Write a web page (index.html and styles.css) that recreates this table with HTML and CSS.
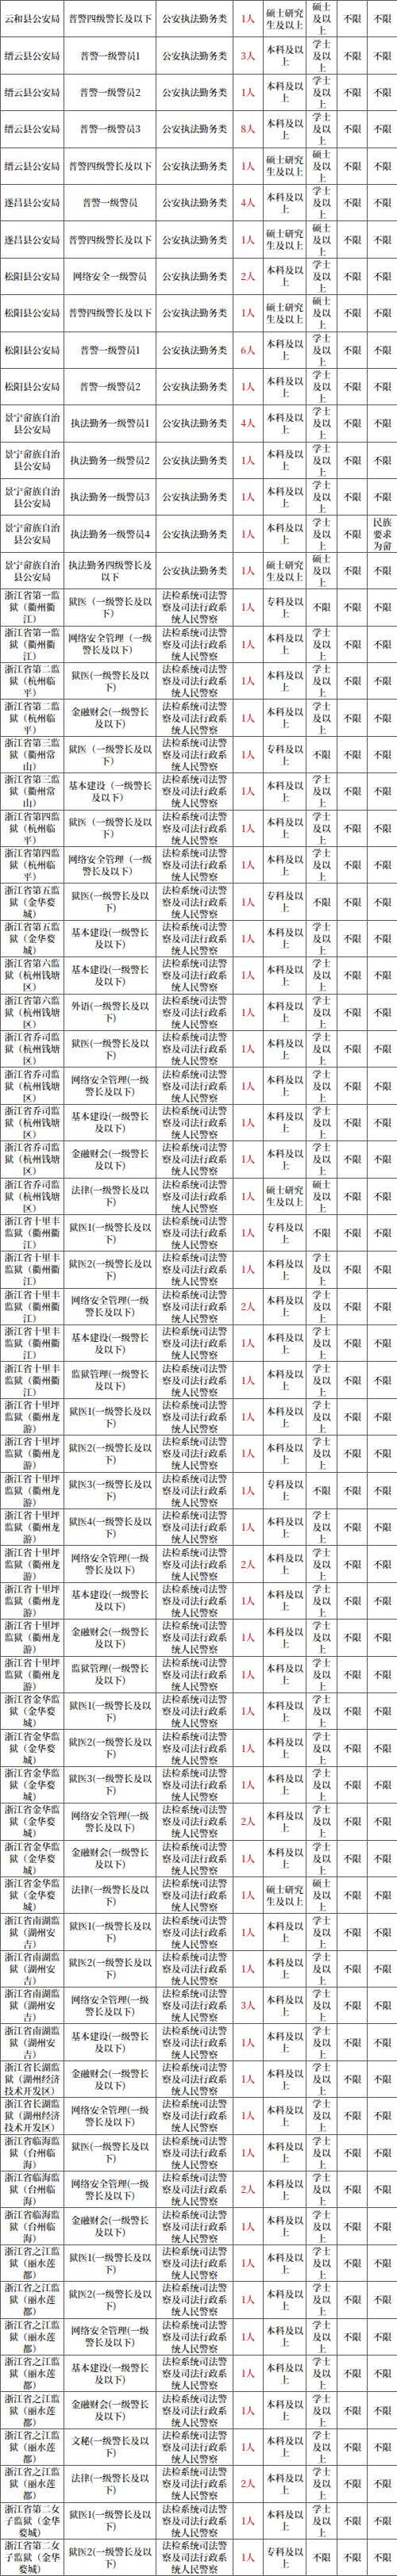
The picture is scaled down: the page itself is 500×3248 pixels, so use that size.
FILE: index.html
```html
<!DOCTYPE html>
<html lang="zh-CN">
<head>
<meta charset="utf-8">
<title>职位表</title>
<link rel="stylesheet" href="styles.css">
</head>
<body>
<table class="posts">
<colgroup>
<col class="c-unit"><col class="c-post"><col class="c-type"><col class="c-num"><col class="c-edu"><col class="c-deg"><col class="c-a"><col class="c-b">
</colgroup>
<tbody>
<tr><td>云和县公安局</td><td>普警四级警长及以下</td><td>公安执法勤务类</td><td class="num">1人</td><td>硕士研究生及以上</td><td>硕士及以上</td><td>不限</td><td>不限</td></tr>
<tr><td>缙云县公安局</td><td>普警一级警员1</td><td>公安执法勤务类</td><td class="num">3人</td><td>本科及以上</td><td>学士及以上</td><td>不限</td><td>不限</td></tr>
<tr><td>缙云县公安局</td><td>普警一级警员2</td><td>公安执法勤务类</td><td class="num">1人</td><td>本科及以上</td><td>学士及以上</td><td>不限</td><td>不限</td></tr>
<tr><td>缙云县公安局</td><td>普警一级警员3</td><td>公安执法勤务类</td><td class="num">8人</td><td>本科及以上</td><td>学士及以上</td><td>不限</td><td>不限</td></tr>
<tr><td>缙云县公安局</td><td>普警四级警长及以下</td><td>公安执法勤务类</td><td class="num">1人</td><td>硕士研究生及以上</td><td>硕士及以上</td><td>不限</td><td>不限</td></tr>
<tr><td>遂昌县公安局</td><td>普警一级警员</td><td>公安执法勤务类</td><td class="num">4人</td><td>本科及以上</td><td>学士及以上</td><td>不限</td><td>不限</td></tr>
<tr><td>遂昌县公安局</td><td>普警四级警长及以下</td><td>公安执法勤务类</td><td class="num">1人</td><td>硕士研究生及以上</td><td>硕士及以上</td><td>不限</td><td>不限</td></tr>
<tr><td>松阳县公安局</td><td>网络安全一级警员</td><td>公安执法勤务类</td><td class="num">2人</td><td>本科及以上</td><td>学士及以上</td><td>不限</td><td>不限</td></tr>
<tr><td>松阳县公安局</td><td>普警四级警长及以下</td><td>公安执法勤务类</td><td class="num">1人</td><td>硕士研究生及以上</td><td>硕士及以上</td><td>不限</td><td>不限</td></tr>
<tr><td>松阳县公安局</td><td>普警一级警员1</td><td>公安执法勤务类</td><td class="num">6人</td><td>本科及以上</td><td>学士及以上</td><td>不限</td><td>不限</td></tr>
<tr><td>松阳县公安局</td><td>普警一级警员2</td><td>公安执法勤务类</td><td class="num">1人</td><td>本科及以上</td><td>学士及以上</td><td>不限</td><td>不限</td></tr>
<tr><td>景宁畲族自治县公安局</td><td>执法勤务一级警员1</td><td>公安执法勤务类</td><td class="num">4人</td><td>本科及以上</td><td>学士及以上</td><td>不限</td><td>不限</td></tr>
<tr><td>景宁畲族自治县公安局</td><td>执法勤务一级警员2</td><td>公安执法勤务类</td><td class="num">1人</td><td>本科及以上</td><td>学士及以上</td><td>不限</td><td>不限</td></tr>
<tr><td>景宁畲族自治县公安局</td><td>执法勤务一级警员3</td><td>公安执法勤务类</td><td class="num">1人</td><td>本科及以上</td><td>学士及以上</td><td>不限</td><td>不限</td></tr>
<tr><td>景宁畲族自治县公安局</td><td>执法勤务一级警员4</td><td>公安执法勤务类</td><td class="num">1人</td><td>本科及以上</td><td>学士及以上</td><td>不限</td><td>民族要求为畲</td></tr>
<tr><td>景宁畲族自治县公安局</td><td>执法勤务四级警长及以下</td><td>公安执法勤务类</td><td class="num">1人</td><td>硕士研究生及以上</td><td>硕士及以上</td><td>不限</td><td>不限</td></tr>
<tr><td>浙江省第一监狱（衢州衢江）</td><td>狱医（一级警长及以下）</td><td>法检系统司法警察及司法行政系统人民警察</td><td class="num">1人</td><td>专科及以上</td><td>不限</td><td>不限</td><td>不限</td></tr>
<tr><td>浙江省第一监狱（衢州衢江）</td><td>网络安全管理（一级警长及以下）</td><td>法检系统司法警察及司法行政系统人民警察</td><td class="num">1人</td><td>本科及以上</td><td>学士及以上</td><td>不限</td><td>不限</td></tr>
<tr><td>浙江省第二监狱（杭州临平）</td><td>狱医(一级警长及以下)</td><td>法检系统司法警察及司法行政系统人民警察</td><td class="num">1人</td><td>本科及以上</td><td>学士及以上</td><td>不限</td><td>不限</td></tr>
<tr><td>浙江省第二监狱（杭州临平）</td><td>金融财会(一级警长及以下)</td><td>法检系统司法警察及司法行政系统人民警察</td><td class="num">1人</td><td>本科及以上</td><td>学士及以上</td><td>不限</td><td>不限</td></tr>
<tr><td>浙江省第三监狱（衢州常山）</td><td>狱医（一级警长及以下）</td><td>法检系统司法警察及司法行政系统人民警察</td><td class="num">1人</td><td>专科及以上</td><td>不限</td><td>不限</td><td>不限</td></tr>
<tr><td>浙江省第三监狱（衢州常山）</td><td>基本建设（一级警长及以下）</td><td>法检系统司法警察及司法行政系统人民警察</td><td class="num">1人</td><td>本科及以上</td><td>学士及以上</td><td>不限</td><td>不限</td></tr>
<tr><td>浙江省第四监狱（杭州临平）</td><td>狱医（一级警长及以下）</td><td>法检系统司法警察及司法行政系统人民警察</td><td class="num">1人</td><td>本科及以上</td><td>学士及以上</td><td>不限</td><td>不限</td></tr>
<tr><td>浙江省第四监狱（杭州临平）</td><td>网络安全管理（一级警长及以下）</td><td>法检系统司法警察及司法行政系统人民警察</td><td class="num">1人</td><td>本科及以上</td><td>学士及以上</td><td>不限</td><td>不限</td></tr>
<tr><td>浙江省第五监狱（金华婺城）</td><td>狱医(一级警长及以下)</td><td>法检系统司法警察及司法行政系统人民警察</td><td class="num">1人</td><td>专科及以上</td><td>不限</td><td>不限</td><td>不限</td></tr>
<tr><td>浙江省第五监狱（金华婺城）</td><td>基本建设(一级警长及以下)</td><td>法检系统司法警察及司法行政系统人民警察</td><td class="num">1人</td><td>本科及以上</td><td>学士及以上</td><td>不限</td><td>不限</td></tr>
<tr><td>浙江省第六监狱（杭州钱塘区）</td><td>基本建设(一级警长及以下)</td><td>法检系统司法警察及司法行政系统人民警察</td><td class="num">1人</td><td>本科及以上</td><td>学士及以上</td><td>不限</td><td>不限</td></tr>
<tr><td>浙江省第六监狱（杭州钱塘区）</td><td>外语(一级警长及以下)</td><td>法检系统司法警察及司法行政系统人民警察</td><td class="num">1人</td><td>本科及以上</td><td>学士及以上</td><td>不限</td><td>不限</td></tr>
<tr><td>浙江省乔司监狱（杭州钱塘区）</td><td>狱医(一级警长及以下)</td><td>法检系统司法警察及司法行政系统人民警察</td><td class="num">1人</td><td>本科及以上</td><td>学士及以上</td><td>不限</td><td>不限</td></tr>
<tr><td>浙江省乔司监狱（杭州钱塘区）</td><td>网络安全管理(一级警长及以下)</td><td>法检系统司法警察及司法行政系统人民警察</td><td class="num">1人</td><td>本科及以上</td><td>学士及以上</td><td>不限</td><td>不限</td></tr>
<tr><td>浙江省乔司监狱（杭州钱塘区）</td><td>基本建设(一级警长及以下)</td><td>法检系统司法警察及司法行政系统人民警察</td><td class="num">1人</td><td>本科及以上</td><td>学士及以上</td><td>不限</td><td>不限</td></tr>
<tr><td>浙江省乔司监狱（杭州钱塘区）</td><td>金融财会(一级警长及以下)</td><td>法检系统司法警察及司法行政系统人民警察</td><td class="num">1人</td><td>本科及以上</td><td>学士及以上</td><td>不限</td><td>不限</td></tr>
<tr><td>浙江省乔司监狱（杭州钱塘区）</td><td>法律(一级警长及以下)</td><td>法检系统司法警察及司法行政系统人民警察</td><td class="num">1人</td><td>硕士研究生及以上</td><td>硕士及以上</td><td>不限</td><td>不限</td></tr>
<tr><td>浙江省十里丰监狱（衢州衢江）</td><td>狱医1(一级警长及以下)</td><td>法检系统司法警察及司法行政系统人民警察</td><td class="num">1人</td><td>专科及以上</td><td>不限</td><td>不限</td><td>不限</td></tr>
<tr><td>浙江省十里丰监狱（衢州衢江）</td><td>狱医2(一级警长及以下)</td><td>法检系统司法警察及司法行政系统人民警察</td><td class="num">1人</td><td>本科及以上</td><td>学士及以上</td><td>不限</td><td>不限</td></tr>
<tr><td>浙江省十里丰监狱（衢州衢江）</td><td>网络安全管理(一级警长及以下)</td><td>法检系统司法警察及司法行政系统人民警察</td><td class="num">2人</td><td>本科及以上</td><td>学士及以上</td><td>不限</td><td>不限</td></tr>
<tr><td>浙江省十里丰监狱（衢州衢江）</td><td>基本建设(一级警长及以下)</td><td>法检系统司法警察及司法行政系统人民警察</td><td class="num">1人</td><td>本科及以上</td><td>学士及以上</td><td>不限</td><td>不限</td></tr>
<tr><td>浙江省十里丰监狱（衢州衢江）</td><td>监狱管理(一级警长及以下)</td><td>法检系统司法警察及司法行政系统人民警察</td><td class="num">1人</td><td>本科及以上</td><td>学士及以上</td><td>不限</td><td>不限</td></tr>
<tr><td>浙江省十里坪监狱（衢州龙游）</td><td>狱医1(一级警长及以下)</td><td>法检系统司法警察及司法行政系统人民警察</td><td class="num">1人</td><td>本科及以上</td><td>学士及以上</td><td>不限</td><td>不限</td></tr>
<tr><td>浙江省十里坪监狱（衢州龙游）</td><td>狱医2(一级警长及以下)</td><td>法检系统司法警察及司法行政系统人民警察</td><td class="num">1人</td><td>本科及以上</td><td>学士及以上</td><td>不限</td><td>不限</td></tr>
<tr><td>浙江省十里坪监狱（衢州龙游）</td><td>狱医3(一级警长及以下)</td><td>法检系统司法警察及司法行政系统人民警察</td><td class="num">1人</td><td>专科及以上</td><td>不限</td><td>不限</td><td>不限</td></tr>
<tr><td>浙江省十里坪监狱（衢州龙游）</td><td>狱医4(一级警长及以下)</td><td>法检系统司法警察及司法行政系统人民警察</td><td class="num">1人</td><td>本科及以上</td><td>学士及以上</td><td>不限</td><td>不限</td></tr>
<tr><td>浙江省十里坪监狱（衢州龙游）</td><td>网络安全管理(一级警长及以下)</td><td>法检系统司法警察及司法行政系统人民警察</td><td class="num">2人</td><td>本科及以上</td><td>学士及以上</td><td>不限</td><td>不限</td></tr>
<tr><td>浙江省十里坪监狱（衢州龙游）</td><td>基本建设(一级警长及以下)</td><td>法检系统司法警察及司法行政系统人民警察</td><td class="num">1人</td><td>本科及以上</td><td>学士及以上</td><td>不限</td><td>不限</td></tr>
<tr><td>浙江省十里坪监狱（衢州龙游）</td><td>金融财会(一级警长及以下)</td><td>法检系统司法警察及司法行政系统人民警察</td><td class="num">1人</td><td>本科及以上</td><td>学士及以上</td><td>不限</td><td>不限</td></tr>
<tr><td>浙江省十里坪监狱（衢州龙游）</td><td>监狱管理(一级警长及以下)</td><td>法检系统司法警察及司法行政系统人民警察</td><td class="num">1人</td><td>本科及以上</td><td>学士及以上</td><td>不限</td><td>不限</td></tr>
<tr><td>浙江省金华监狱（金华婺城）</td><td>狱医1(一级警长及以下)</td><td>法检系统司法警察及司法行政系统人民警察</td><td class="num">1人</td><td>本科及以上</td><td>学士及以上</td><td>不限</td><td>不限</td></tr>
<tr><td>浙江省金华监狱（金华婺城）</td><td>狱医2(一级警长及以下)</td><td>法检系统司法警察及司法行政系统人民警察</td><td class="num">1人</td><td>本科及以上</td><td>学士及以上</td><td>不限</td><td>不限</td></tr>
<tr><td>浙江省金华监狱（金华婺城）</td><td>狱医3(一级警长及以下)</td><td>法检系统司法警察及司法行政系统人民警察</td><td class="num">1人</td><td>本科及以上</td><td>学士及以上</td><td>不限</td><td>不限</td></tr>
<tr><td>浙江省金华监狱（金华婺城）</td><td>网络安全管理(一级警长及以下)</td><td>法检系统司法警察及司法行政系统人民警察</td><td class="num">2人</td><td>本科及以上</td><td>学士及以上</td><td>不限</td><td>不限</td></tr>
<tr><td>浙江省金华监狱（金华婺城）</td><td>金融财会(一级警长及以下)</td><td>法检系统司法警察及司法行政系统人民警察</td><td class="num">1人</td><td>本科及以上</td><td>学士及以上</td><td>不限</td><td>不限</td></tr>
<tr><td>浙江省金华监狱（金华婺城）</td><td>法律(一级警长及以下)</td><td>法检系统司法警察及司法行政系统人民警察</td><td class="num">1人</td><td>硕士研究生及以上</td><td>硕士及以上</td><td>不限</td><td>不限</td></tr>
<tr><td>浙江省南湖监狱（湖州安吉）</td><td>狱医1(一级警长及以下)</td><td>法检系统司法警察及司法行政系统人民警察</td><td class="num">1人</td><td>本科及以上</td><td>学士及以上</td><td>不限</td><td>不限</td></tr>
<tr><td>浙江省南湖监狱（湖州安吉）</td><td>狱医2(一级警长及以下)</td><td>法检系统司法警察及司法行政系统人民警察</td><td class="num">1人</td><td>本科及以上</td><td>学士及以上</td><td>不限</td><td>不限</td></tr>
<tr><td>浙江省南湖监狱（湖州安吉）</td><td>网络安全管理(一级警长及以下)</td><td>法检系统司法警察及司法行政系统人民警察</td><td class="num">3人</td><td>本科及以上</td><td>学士及以上</td><td>不限</td><td>不限</td></tr>
<tr><td>浙江省南湖监狱（湖州安吉）</td><td>基本建设(一级警长及以下)</td><td>法检系统司法警察及司法行政系统人民警察</td><td class="num">1人</td><td>本科及以上</td><td>学士及以上</td><td>不限</td><td>不限</td></tr>
<tr><td>浙江省长湖监狱（湖州经济技术开发区）</td><td>金融财会(一级警长及以下)</td><td>法检系统司法警察及司法行政系统人民警察</td><td class="num">1人</td><td>本科及以上</td><td>学士及以上</td><td>不限</td><td>不限</td></tr>
<tr><td>浙江省长湖监狱（湖州经济技术开发区）</td><td>网络安全管理(一级警长及以下)</td><td>法检系统司法警察及司法行政系统人民警察</td><td class="num">1人</td><td>本科及以上</td><td>学士及以上</td><td>不限</td><td>不限</td></tr>
<tr><td>浙江省临海监狱（台州临海）</td><td>狱医(一级警长及以下)</td><td>法检系统司法警察及司法行政系统人民警察</td><td class="num">1人</td><td>本科及以上</td><td>学士及以上</td><td>不限</td><td>不限</td></tr>
<tr><td>浙江省临海监狱（台州临海）</td><td>网络安全管理(一级警长及以下)</td><td>法检系统司法警察及司法行政系统人民警察</td><td class="num">2人</td><td>本科及以上</td><td>学士及以上</td><td>不限</td><td>不限</td></tr>
<tr><td>浙江省临海监狱（台州临海）</td><td>金融财会(一级警长及以下)</td><td>法检系统司法警察及司法行政系统人民警察</td><td class="num">1人</td><td>本科及以上</td><td>学士及以上</td><td>不限</td><td>不限</td></tr>
<tr><td>浙江省之江监狱（丽水莲都）</td><td>狱医1(一级警长及以下)</td><td>法检系统司法警察及司法行政系统人民警察</td><td class="num">1人</td><td>本科及以上</td><td>学士及以上</td><td>不限</td><td>不限</td></tr>
<tr><td>浙江省之江监狱（丽水莲都）</td><td>狱医2(一级警长及以下)</td><td>法检系统司法警察及司法行政系统人民警察</td><td class="num">1人</td><td>本科及以上</td><td>学士及以上</td><td>不限</td><td>不限</td></tr>
<tr><td>浙江省之江监狱（丽水莲都）</td><td>网络安全管理(一级警长及以下)</td><td>法检系统司法警察及司法行政系统人民警察</td><td class="num">1人</td><td>本科及以上</td><td>学士及以上</td><td>不限</td><td>不限</td></tr>
<tr><td>浙江省之江监狱（丽水莲都）</td><td>基本建设(一级警长及以下)</td><td>法检系统司法警察及司法行政系统人民警察</td><td class="num">1人</td><td>本科及以上</td><td>学士及以上</td><td>不限</td><td>不限</td></tr>
<tr><td>浙江省之江监狱（丽水莲都）</td><td>金融财会(一级警长及以下)</td><td>法检系统司法警察及司法行政系统人民警察</td><td class="num">1人</td><td>本科及以上</td><td>学士及以上</td><td>不限</td><td>不限</td></tr>
<tr><td>浙江省之江监狱（丽水莲都）</td><td>文秘(一级警长及以下)</td><td>法检系统司法警察及司法行政系统人民警察</td><td class="num">1人</td><td>本科及以上</td><td>学士及以上</td><td>不限</td><td>不限</td></tr>
<tr><td>浙江省之江监狱（丽水莲都）</td><td>法律(一级警长及以下)</td><td>法检系统司法警察及司法行政系统人民警察</td><td class="num">2人</td><td>本科及以上</td><td>学士及以上</td><td>不限</td><td>不限</td></tr>
<tr><td>浙江省第二女子监狱（金华婺城）</td><td>狱医1(一级警长及以下)</td><td>法检系统司法警察及司法行政系统人民警察</td><td class="num">1人</td><td>本科及以上</td><td>学士及以上</td><td>不限</td><td>不限</td></tr>
<tr><td>浙江省第二女子监狱（金华婺城）</td><td>狱医2(一级警长及以下)</td><td>法检系统司法警察及司法行政系统人民警察</td><td class="num">1人</td><td>专科及以上</td><td>不限</td><td>不限</td><td>不限</td></tr>
</tbody>
</table>
</body>
</html>
```

FILE: styles.css
```css
html, body {
  margin: 0;
  padding: 0;
  background: #ffffff;
}

.posts {
  width: 500px;
  table-layout: fixed;
  border-collapse: collapse;
  font-family: "Noto Serif CJK SC", "Noto Sans CJK SC", serif;
  font-size: 11.7px;
  font-weight: 600;
  line-height: 15px;
  color: #1e1e1e;
}

.c-unit { width: 80px; }
.c-post { width: 116px; }
.c-type { width: 97px; }
.c-num  { width: 38px; }
.c-edu  { width: 54px; }
.c-deg  { width: 39px; }
.c-a    { width: 38px; }
.c-b    { width: 38px; }

.posts tr {
  height: 46.4px;
}

.posts td {
  border: 1px solid #5a5a5a;
  padding: 0 3px;
  text-align: center;
  vertical-align: middle;
  word-break: break-all;
}

.posts td:nth-child(2) {
  padding: 0 4px;
}

.posts td:nth-child(5) {
  padding: 0 2px;
}

.posts td.num {
  color: #d9232a;
  padding: 0 2px;
}
```
